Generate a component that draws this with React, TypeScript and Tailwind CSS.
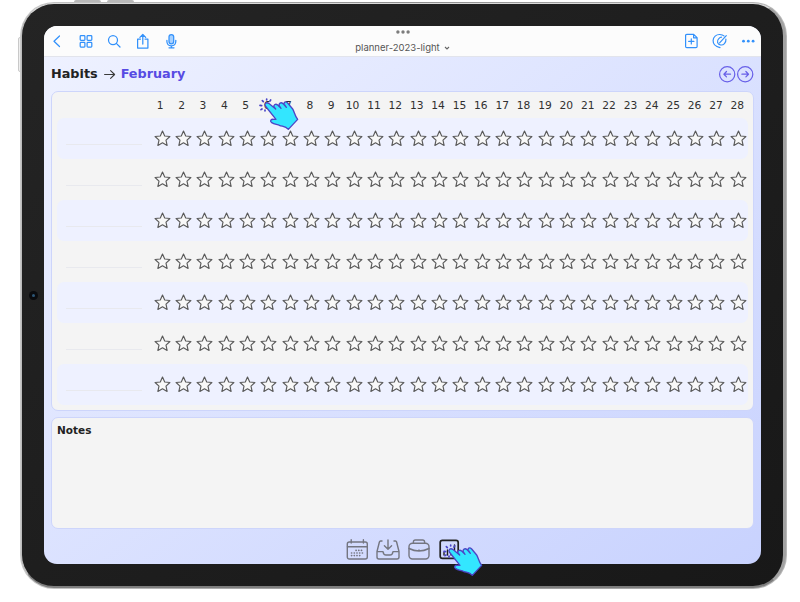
import React from 'react';

const DAYS = Array.from({ length: 28 }, (_, i) => i + 1);
const HABITS = [0, 1, 2, 3, 4, 5, 6];

function Star() {
  return (
    <svg className="h-[17px] w-[17px] shrink-0" viewBox="0 0 17 17" fill="#f8f8f8" stroke="#5a5a5a" strokeWidth="1.15" strokeLinejoin="round">
      <path d="M8.5 1 L10.7 6 L15.9 6.5 L12 10.1 L13.1 15.4 L8.5 12.8 L3.9 15.4 L5 10.1 L1.1 6.5 L6.3 6 Z" />
    </svg>
  );
}

function Hand({ className }: { className: string }) {
  return (
    <svg className={'absolute h-[36px] w-[44px] ' + className} viewBox="0 0 132 108" fill="none" stroke="#4b45c6" strokeWidth="4" strokeLinecap="round" strokeLinejoin="round">
      <path
        fill="#33e6ff"
        d="M22 27 C18 21 25 14 32 19 L53 36 L48 30 C46 23 53 19 59 24 L69 34 L64 27 C61 19 69 14 75 20 L85 31 L79 22 C76 15 83 12 89 18 L104 36 C109 43 109 54 119 67 L91 97 C83 88 75 89 64 85 C54 82 47 81 40 76 C35 72 39 66 47 67 L54 67 Z"
      />
      <path strokeWidth="5" d="M6 25 L11 26 M13 11 L16 14 M26 6 L26 9 M38 9 L36 12 M9 38 L12 36 M21 39 L21 42" />
    </svg>
  );
}

function Toolbar() {
  return (
    <header className="flex h-[31px] shrink-0 items-center border-b border-[#e2e4ec] bg-[#fcfcfc] text-[#3291fb]">
      <svg className="h-[30px] w-[150px] shrink-0" viewBox="0 0 150 30" fill="none" stroke="currentColor" strokeWidth="1.25" strokeLinecap="round" strokeLinejoin="round">
        <path d="M15.5 10 L10 15.2 L15.5 20.5" />
        <rect x="36.2" y="9.6" width="4.7" height="4.7" rx="0.8" />
        <rect x="43.1" y="9.6" width="4.7" height="4.7" rx="0.8" />
        <rect x="36.2" y="16.4" width="4.7" height="4.7" rx="0.8" />
        <rect x="43.1" y="16.4" width="4.7" height="4.7" rx="0.8" />
        <circle cx="69" cy="14.1" r="4.5" />
        <path d="M72.3 17.4 L76 21" />
        <path d="M96.5 13 H93.6 V22 H103.9 V13 H101 M98.8 18 V8.7 M95.9 11.4 L98.8 8.5 L101.7 11.4" />
        <rect x="125" y="8.5" width="4.7" height="9.3" rx="2.35" fill="#a7d1ff" />
        <path d="M122.9 14.3 V15.3 C122.9 21.3 131.8 21.3 131.8 15.3 V14.3 M127.4 19.8 V21.7 M125 21.8 H130" />
      </svg>
      <div className="flex flex-1 justify-center">
        <div className="flex h-[30px] w-[120px] flex-col items-center text-[#555]">
          <svg className="mt-[4px] h-[5px] w-[16px]" viewBox="0 0 16 5" fill="#7c7c7c">
            <circle cx="2.9" cy="2" r="1.7" />
            <circle cx="8" cy="2" r="1.7" />
            <circle cx="13.1" cy="2" r="1.7" />
          </svg>
          <div className="mt-[6px] flex h-[14px] items-center gap-[4px] whitespace-nowrap font-['Inter',sans-serif] text-[9.5px] leading-[14px]">
            <span>planner-2023-light</span>
            <svg className="h-[6px] w-[6px]" viewBox="0 0 6 6" fill="none" stroke="#666" strokeWidth="1.1">
              <path d="M1 2 L3 4 L5 2" />
            </svg>
          </div>
        </div>
      </div>
      <svg className="mr-px ml-[71px] h-[30px] w-[78px] shrink-0" viewBox="0 0 78 30" fill="none" stroke="currentColor" strokeWidth="1.2" strokeLinecap="round" strokeLinejoin="round">
        <path d="M4.8 8.3 H11.7 L15.1 11.7 V20.5 Q15.1 21.7 13.9 21.7 H4.8 Q3.6 21.7 3.6 20.5 V9.5 Q3.6 8.3 4.8 8.3 Z M11.6 8.5 V11.8 H15 M9.3 12.8 V18 M6.7 15.4 H11.9" />
        <path d="M38 21.7 C33.5 20.7 31 17.9 31.1 14.6 C31.2 10.9 34.2 8.4 37.8 8.5 C39.6 8.6 41 9 42 9.9 M43.9 13.2 C44.2 16.8 41.6 19.5 38.4 18.9 C35.2 18.2 34.6 14.8 36.8 12.6 C37.6 11.8 38.5 11.3 39.5 11.2 M37.6 16.8 L44.3 9.6" />
        <g fill="currentColor" stroke="none">
          <circle cx="61.5" cy="15.2" r="1.4" />
          <circle cx="66.3" cy="15.2" r="1.4" />
          <circle cx="71.1" cy="15.2" r="1.4" />
        </g>
      </svg>
    </header>
  );
}

function PageHeading() {
  return (
    <div className="flex h-[34px] shrink-0 items-center justify-between pr-[7px] pb-px pl-[7px] text-[12.8px] font-bold">
      <div className="flex items-center">
        <span className="text-[#222]">Habits</span>
        <svg className="mr-[5px] ml-[6px] h-[12px] w-[12px]" viewBox="0 0 12 12" fill="none" stroke="#3a3a3a" strokeWidth="1.1" strokeLinecap="round" strokeLinejoin="round">
          <path d="M0.6 6.5 H10.6 M6.6 2.6 L10.6 6.5 L6.6 10.4" />
        </svg>
        <span className="text-[#574be3]">February</span>
      </div>
      <svg className="h-[18px] w-[36px]" viewBox="0 0 36 18" fill="none" stroke="#6860e8" strokeWidth="1.25" strokeLinecap="round" strokeLinejoin="round">
        <circle cx="9.2" cy="9.2" r="7.6" />
        <circle cx="27.2" cy="9.2" r="7.6" />
        <path d="M12.5 9.2 H5.9 M8.5 6.5 L5.9 9.2 L8.5 11.9 M23.9 9.2 H30.5 M27.9 6.5 L30.5 9.2 L27.9 11.9" />
      </svg>
    </div>
  );
}

function HabitTable() {
  return (
    <section className="mx-[7px] h-[320px] shrink-0 rounded-[7px] border border-[#cdd5fb] bg-[#f4f4f4] px-[5px]">
      <div className="flex h-[26px] items-center pt-[2px] pl-[92.5px] text-[10.7px] text-[#303030]">
        {DAYS.map((day) => (
          <span key={day} className="w-[21.38px] shrink-0 text-center">{day}</span>
        ))}
      </div>
      {HABITS.map((row) => (
        <div key={row} className={'flex h-[41px] items-center rounded-[7px] ' + (row % 2 === 0 ? 'bg-[#eef1ff]' : '')}>
          <div className="mt-[11px] ml-[9px] h-px w-[76px] shrink-0 bg-[#e8e9ee]" />
          <div className="mb-[1px] ml-[9.6px] flex">
            {DAYS.map((day) => (
              <div key={day} className="flex w-[21.34px] shrink-0 justify-center">
                <Star />
              </div>
            ))}
          </div>
        </div>
      ))}
    </section>
  );
}

function Dock() {
  return (
    <nav className="flex flex-1 items-start justify-center pt-[8px]">
      <svg className="ml-[3px] h-[24px] w-[116px]" viewBox="0 0 116 24" fill="none" stroke="#747681" strokeWidth="1.4" strokeLinecap="round" strokeLinejoin="round">
        <rect x="1.3" y="4" width="20" height="17" rx="2" />
        <path d="M1.5 8.8 H21.2 M5.2 1.8 V5 M17.4 1.8 V5" />
        <path strokeWidth="1.6" strokeDasharray="0.2 2.5" d="M10 12.4 H18 M5.5 15 H18 M5.5 17.6 H14" />
        <path d="M36 3 H34.5 Q33.7 3 33.4 4 L31 13.5 V19 Q31 21 33 21 H51 Q53 21 53 19 V13.5 L50.6 4 Q50.3 3 49.5 3 H48 M31.2 13.6 H37 Q37.5 17 40 17 H44 Q46.5 17 47 13.6 H52.8 M42 2 V11 M38.4 7.8 L42 11.2 L45.6 7.8" />
        <rect x="63" y="5.3" width="20" height="15.7" rx="3.5" />
        <path d="M67.4 5 V4 Q67.4 2 69.4 2 H76.6 Q78.6 2 78.6 4 V5 M63 10.5 Q73 15.5 83 10.5 M73 12 V12.2" />
        <rect x="94.2" y="2.4" width="18" height="18" rx="2.2" stroke="#222" strokeWidth="1.7" />
        <path stroke="#222" strokeWidth="1.4" d="M98 14.5 V17 M101.5 12 V17 M105 14 V17 M108.5 7 V17" />
      </svg>
    </nav>
  );
}

export default function App() {
  return (
    <div className="relative h-[602px] w-[800px] overflow-hidden bg-white pt-[2px] pl-[20px] font-['DejaVu_Sans',sans-serif]">
      <div className="absolute top-[37px] left-[18px] h-[35px] w-[4px] rounded-l-[2px] border border-[#c9c9c9] bg-[#eee]" />
      <div className="absolute top-0 left-[74px] h-[3px] w-[27px] rounded-t-[2px] bg-[#b9b9b9]" />
      <div className="absolute top-0 left-[107px] h-[3px] w-[27px] rounded-t-[2px] bg-[#b9b9b9]" />
      <div className="relative h-[587px] w-[767px] rounded-[34px] bg-linear-to-r from-[#c9c9c9] via-[#8e8e8e] to-[#b9b9b9] p-px">
        <div className="h-full rounded-[33px] border-t border-r-[3px] border-b-2 border-l border-t-[#dadada] border-r-[#a2a2a2] border-b-[#7e7e7e] border-l-[#bcbcbc] bg-linear-to-br from-[#242424] to-[#181818] pt-[22px] pl-[22px]">
          <main className="flex h-[538px] w-[717px] flex-col overflow-hidden rounded-[13px] bg-linear-to-br from-[#eff2ff] to-[#c8d2fe]">
            <Toolbar />
            <PageHeading />
            <HabitTable />
            <section className="mx-[7px] mt-[6px] mb-px h-[112px] shrink-0 rounded-[7px] border border-[#cdd5fb] bg-[#f4f4f4] pt-[5px] pl-[5px] text-[10.5px] leading-[15px] font-bold text-[#222]">
              Notes
            </section>
            <Dock />
          </main>
        </div>
      </div>
      <div className="absolute top-[291px] left-[29px] flex h-[9px] w-[9px] items-center justify-center rounded-full bg-[#0a0b0e]">
        <div className="h-[3px] w-[3px] rounded-full bg-[#2d5676]" />
      </div>
      <Hand className="top-[97px] left-[258px]" />
      <Hand className="top-[543px] left-[442px]" />
    </div>
  );
}
